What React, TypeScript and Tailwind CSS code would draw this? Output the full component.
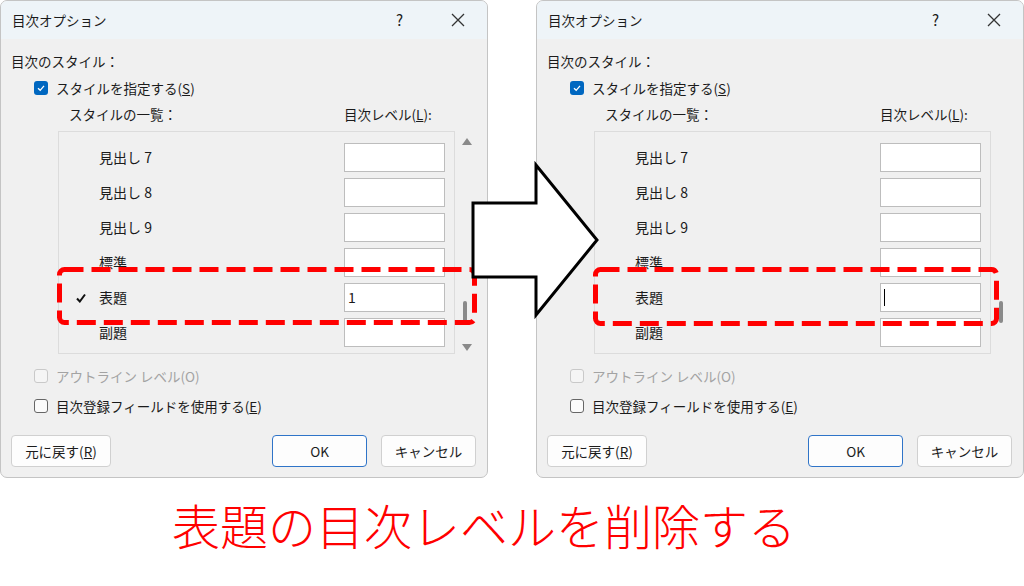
import React from 'react';

const FONT = { fontFamily: '"Noto Sans CJK JP", "Noto Sans", sans-serif' };

interface Row {
  label: string;
  value?: string;
  checked?: boolean;
  cursor?: boolean;
}

interface DialogProps {
  rows: Row[];
  showArrows: boolean;
}

const CheckBox: React.FC<{ checked?: boolean; disabled?: boolean }> = ({ checked, disabled }) => {
  if (checked) {
    return (
      <span className="w-[14px] h-[14px] rounded-[3px] bg-[#0067c0] flex items-center justify-center">
        <svg width="10" height="10" viewBox="0 0 10 10">
          <path d="M2 5.2 L4.2 7.3 L8 2.8" stroke="white" strokeWidth="1.3" fill="none" />
        </svg>
      </span>
    );
  }
  return (
    <span
      className={`w-[14px] h-[14px] rounded-[3px] border ${
        disabled ? 'border-[#c9c9c9] bg-[#f5f5f5]' : 'border-[#666] bg-[#fbfbfb]'
      }`}
    />
  );
};

const Dialog: React.FC<DialogProps> = ({ rows, showArrows }) => {
  return (
    <div className="w-[488px] h-[478px] shrink-0 flex flex-col rounded-[7px] border border-[#c4c4c4] bg-[#f0f0f0] overflow-hidden text-[13.5px] text-[#1b1b1b]">
      {/* Title bar */}
      <div className="h-[38px] shrink-0 bg-[#eef4f8] flex items-center pl-[11px] pr-[22px]">
        <span>目次オプション</span>
        <span className="ml-auto mr-[48px] text-[15px]">?</span>
        <svg width="14" height="14" viewBox="0 0 14 14">
          <path d="M1 1 L13 13 M13 1 L1 13" stroke="#333" strokeWidth="1.3" />
        </svg>
      </div>

      <div className="flex flex-col px-[10px] pt-[12px]">
        <div className="h-[20px] leading-[20px]">目次のスタイル：</div>

        <div className="mt-[7px] h-[20px] flex items-center gap-[8px] pl-[23px]">
          <CheckBox checked />
          <span>
            スタイルを指定する(<span className="underline">S</span>)
          </span>
        </div>

        <div className="mt-[6px] h-[20px] flex items-center">
          <span className="pl-[58px] w-[333px]">スタイルの一覧：</span>
          <span>
            目次レベル(<span className="underline">L</span>):
          </span>
        </div>

        {/* List area */}
        <div className="mt-[7px] flex">
          <div className="ml-[47px] w-[398px] h-[223px] border border-[#dcdcdc] bg-[#f0f0f0] flex flex-col gap-[6px] pt-[11px] overflow-hidden">
            {rows.map((r) => (
              <div key={r.label} className="h-[29px] shrink-0 flex items-center">
                <span className="w-[40px] pl-[17px] flex items-center">
                  {r.checked && (
                    <svg width="10" height="10" viewBox="0 0 10 10">
                      <path d="M1 5.5 L3.8 8.5 L9 1.5" stroke="#111" strokeWidth="2" fill="none" />
                    </svg>
                  )}
                </span>
                <span className="text-[14px]">{r.label}</span>
                <span className="ml-auto mr-[9px] w-[101px] h-[29px] bg-white border border-[#bdbdbd] flex items-center pl-[3px] text-[14px]">
                  {r.value}
                  {r.cursor && <span className="w-[1px] h-[17px] bg-black" />}
                </span>
              </div>
            ))}
          </div>
          <div className="w-[20px] ml-[2px] h-[223px] relative">
            {showArrows && (
              <>
                <svg className="absolute left-[5px] top-[7px]" width="10" height="7" viewBox="0 0 10 7">
                  <path d="M0 7 L5 0 L10 7 Z" fill="#8a8a8a" />
                </svg>
                <svg className="absolute left-[5px] top-[213px]" width="10" height="7" viewBox="0 0 10 7">
                  <path d="M0 0 L5 7 L10 0 Z" fill="#8a8a8a" />
                </svg>
              </>
            )}
            <span className="absolute left-[6px] top-[170px] w-[4px] h-[22px] rounded-[2px] bg-[#8a8a8a]" />
          </div>
        </div>

        <div className="mt-[12px] h-[20px] flex items-center gap-[8px] pl-[23px] text-[#a3a3a3]">
          <CheckBox disabled />
          <span>アウトライン レベル(O)</span>
        </div>

        <div className="mt-[10px] h-[20px] flex items-center gap-[8px] pl-[23px]">
          <CheckBox />
          <span>
            目次登録フィールドを使用する(<span className="underline">E</span>)
          </span>
        </div>

        {/* Buttons */}
        <div className="mt-[19px] h-[32px] flex">
          <button className="w-[100px] h-[32px] rounded-[4px] border border-[#d0d0d0] bg-[#fdfdfd]">
            元に戻す(<span className="underline">R</span>)
          </button>
          <button className="ml-auto w-[95px] h-[32px] rounded-[4px] border border-[#2f74c8] bg-[#fdfdfd]">
            OK
          </button>
          <button className="ml-[14px] mr-[1px] w-[95px] h-[32px] rounded-[4px] border border-[#d0d0d0] bg-[#fdfdfd]">
            キャンセル
          </button>
        </div>
      </div>
    </div>
  );
};

const leftRows: Row[] = [
  { label: '見出し 7' },
  { label: '見出し 8' },
  { label: '見出し 9' },
  { label: '標準' },
  { label: '表題', value: '1', checked: true },
  { label: '副題' },
];

const rightRows: Row[] = [
  { label: '見出し 7' },
  { label: '見出し 8' },
  { label: '見出し 9' },
  { label: '標準' },
  { label: '表題', cursor: true },
  { label: '副題' },
];

export default function App() {
  return (
    <div className="w-[1024px] h-[586px] bg-white relative overflow-hidden" style={FONT}>
      <div className="flex gap-[48px]">
        <Dialog rows={leftRows} showArrows />
        <Dialog rows={rightRows} showArrows={false} />
      </div>

      <div className="mt-[22px] pl-[172px] text-[48px] leading-[48px] font-light text-[#f00] whitespace-nowrap">
        表題の目次レベルを削除する
      </div>

      {/* Annotations over the dialogs */}
      <svg className="absolute left-0 top-0 pointer-events-none" width="1024" height="586">
        <rect x="59.5" y="269.5" width="415" height="53" rx="5" fill="none" stroke="#f00" strokeWidth="5" strokeDasharray="19 8" />
        <rect x="595.5" y="269.5" width="401" height="54" rx="5" fill="none" stroke="#f00" strokeWidth="5" strokeDasharray="19 8" />
        <polygon
          points="473,203 536,203 536,165 597,240 536,315 536,277 473,277"
          fill="white"
          stroke="black"
          strokeWidth="3"
          strokeLinejoin="miter"
        />
      </svg>
    </div>
  );
}
